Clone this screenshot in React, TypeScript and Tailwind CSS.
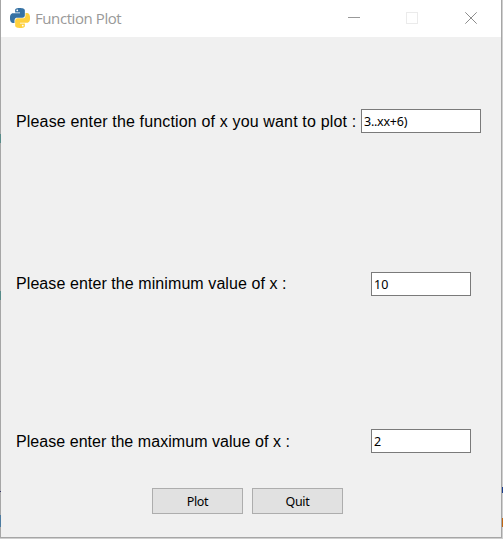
import React from "react";

const SNAKE =
  "M14.25.18l.9.2.73.26.59.3.45.32.34.34.25.34.16.33.1.3.04.26.02.2-.01.13V8.5l-.05.63-.13.55-.21.46-.26.38-.3.31-.33.25-.35.19-.35.14-.33.1-.3.07-.26.04-.21.02H8.77l-.69.05-.59.14-.5.22-.41.27-.33.32-.27.35-.2.36-.15.37-.1.35-.07.32-.04.27-.02.21v3.06H3.17l-.21-.03-.28-.07-.32-.12-.35-.18-.36-.26-.36-.36-.35-.46-.32-.59-.28-.73-.21-.88-.14-1.05-.05-1.23.06-1.22.16-1.04.24-.87.32-.71.36-.57.4-.44.42-.33.42-.24.4-.16.36-.1.32-.05.24-.01h.16l.06.01h8.16v-.83H6.18l-.01-2.75-.02-.37.05-.34.11-.31.17-.28.25-.26.31-.23.38-.2.44-.18.51-.15.58-.12.64-.1.71-.06.77-.04.84-.02 1.27.05zm-6.3 1.98l-.23.33-.08.41.08.41.23.34.33.22.41.09.41-.09.33-.22.23-.34.08-.41-.08-.41-.23-.33-.33-.22-.41-.09-.41.09z";

function PythonLogo() {
  return (
    <svg className="mb-px h-5 w-5 shrink-0" viewBox="0 0 24 24">
      <path d={SNAKE} fill="#3672a4" />
      <path d={SNAKE} fill="#ffd13e" transform="rotate(180 12 12)" />
    </svg>
  );
}

function TitleBar() {
  return (
    <div className="flex h-[37px] items-center bg-white pl-[9px]">
      <PythonLogo />
      <span className="mb-px ml-[5px] whitespace-nowrap font-['Open_Sans','Noto_Sans',sans-serif] text-[15px] leading-5 tracking-[-0.42px] text-[#999999]">
        Function Plot
      </span>
      <svg className="mb-px ml-auto mr-[23px] h-3 w-[130px]" viewBox="0 0 130 12" fill="none">
        <path d="M0 5.5H12" stroke="#999999" />
        <rect x="58.5" y="0.5" width="11" height="11" stroke="#ebebeb" />
        <path d="M117.3 0.3L128.7 11.7M128.7 0.3L117.3 11.7" stroke="#8c8c8c" />
      </svg>
    </div>
  );
}

interface FieldProps {
  label: string;
  value: string;
  labelClass: string;
  inputClass: string;
}

function Field({ label, value, labelClass, inputClass }: FieldProps) {
  return (
    <div className="flex h-6 items-center justify-between pl-[15px]">
      <label className={`whitespace-nowrap text-base leading-6 ${labelClass}`}>{label}</label>
      <input
        defaultValue={value}
        className={`h-6 border border-[#7a7a7a] bg-white px-[2px] font-['Noto_Sans','Open_Sans',sans-serif] text-[12.5px] text-black outline-none ${inputClass}`}
      />
    </div>
  );
}

function PushButton({ children }: { children: React.ReactNode }) {
  return (
    <button className="h-[26px] w-[91px] border border-[#adadad] bg-[#e1e1e1] pt-px font-['Noto_Sans','Open_Sans',sans-serif] text-[12.5px] leading-5 tracking-[-0.35px]">
      {children}
    </button>
  );
}

export default function App() {
  return (
    <div className="relative h-[539px] w-[503px] overflow-hidden bg-[#cfcfcf] font-['Liberation_Sans',Arial,sans-serif] text-black">
      <div className="flex h-[538px] w-[502px] flex-col border-b border-l border-r border-[#a6a6a6] bg-[#f0f0f0]">
        <TitleBar />
        <div className="flex flex-col pt-[72px]">
          <Field
            label="Please enter the function of x you want to plot :"
            value="3..xx+6)"
            labelClass="pt-[2px] tracking-[0.155px]"
            inputClass="mr-5 w-[120px] tracking-[-0.25px]"
          />
          <div className="h-[139px]" />
          <Field
            label="Please enter the minimum value of x :"
            value="10"
            labelClass="tracking-[0.08px]"
            inputClass="mr-[30px] w-[100px]"
          />
          <div className="h-[133px]" />
          <Field
            label="Please enter the maximum value of x :"
            value="2"
            labelClass="pt-[2px] tracking-[0.05px]"
            inputClass="mr-[30px] w-[100px]"
          />
          <div className="flex gap-[9px] pl-[151px] pt-[35px]">
            <PushButton>Plot</PushButton>
            <PushButton>Quit</PushButton>
          </div>
        </div>
      </div>
      <i className="absolute left-0 top-[134px] h-[9px] w-px bg-[#578b89]" />
      <i className="absolute left-0 top-[291px] h-[9px] w-px bg-[#578b89]" />
      <i className="absolute left-0 top-[491px] h-px w-px bg-[#39396b]" />
      <i className="absolute left-0 top-[515px] h-3 w-px bg-[#4c7ba0]" />
      <i className="absolute left-[502px] top-[487px] h-1.5 w-px bg-[#1c3d8c]" />
      <i className="absolute left-[502px] top-[518px] h-[9px] w-px bg-[#c06612]" />
    </div>
  );
}
